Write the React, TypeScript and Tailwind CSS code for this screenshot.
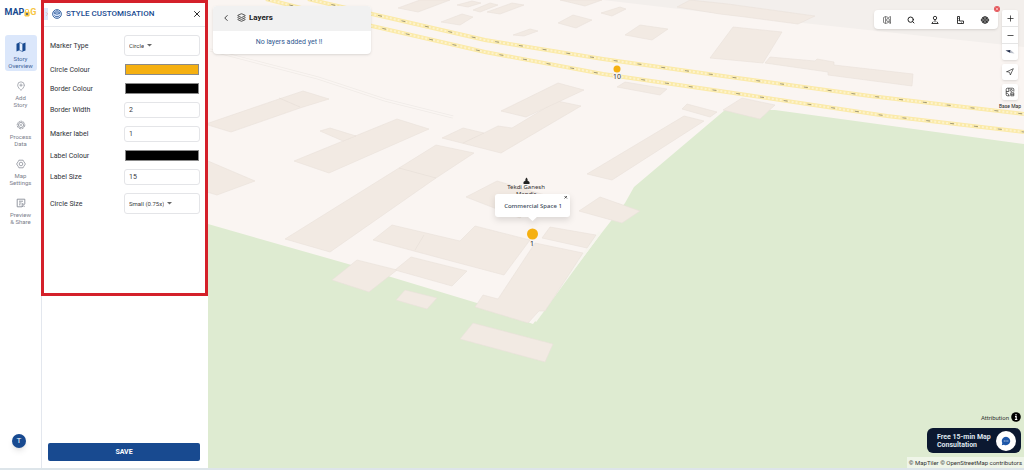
import { useState, type JSX, type ReactNode } from 'react'
import { ChevronLeft, ChevronRight, Layers, MapPinPlusInside, Minus, Navigation, Plus, Search, X } from 'lucide-react'

interface NavEntry {
  lines: [string, string]
  icon: ReactNode
  active?: boolean
}

const NAV: NavEntry[] = [
  { lines: ['Story', 'Overview'], icon: <FoldedMap />, active: true },
  { lines: ['Add', 'Story'], icon: <MapPinPlusInside size={10} strokeWidth={1.5} /> },
  { lines: ['Process', 'Data'], icon: <ProcessIcon /> },
  { lines: ['Map', 'Settings'], icon: <HexGear /> },
  { lines: ['Preview', '& Share'], icon: <PreviewIcon /> },
]

const BUILDINGS = [
  '200,126 279,99 303,91 329,99 300,108 231,132 208,125',
  '294,161 397,119 429,129 329,173',
  '320,131 330,128 356,136 343,141',
  '200,158 208,161 255,181 217,195 200,190',
  '285,239 399,168 436,145 474,153 436,178 330,252',
  '442,138 463,128 484,133 498,126 512,128 557,101 581,106 501,153',
  '501,111 558,83 584,90 526,117',
  '617,87 625,82 667,89 660,95',
  '682,109 687,104 717,112 710,117',
  '587,174 684,116 704,121 612,180',
  '579,211 600,197 640,211 622,223',
  '466,197 497,181 545,195 520,218',
  '373,240 392,225 460,241 475,226 530,240 504,275 440,258',
  '542,238 550,227 596,235 587,248',
  '535,243 583,253 545,311 539,311 528,323 475,307 483,295 498,299',
  '395,270 411,257 467,271 452,286',
  '332,280 357,260 397,270 369,292',
  '396,300 405,290 437,298 427,309',
  '460,339 473,323 553,344 545,362',
  '723,110 742,98 775,105 760,119',
  '710,58 733,27 782,32 763,63',
  '765,63 770,57 815,61 817,59 834,62 834,65 913,74 912,86 828,75 828,72',
  '625,35 640,25 668,29 652,40',
  '558,23 573,15 592,20 576,28',
  '513,35 530,29 538,31 524,36',
  '601,13 620,7 626,9 612,16',
  '487,12 512,3 524,5 500,14',
  '473,10 490,3 498,5 480,12',
  '560,0 585,6 602,0',
  '398,8 420,0 450,0 418,12',
  '457,5 472,1 481,3 468,7',
  '441,22 462,14 473,17 460,25',
  '677,7 690,0 728,4 815,16 798,24 745,17 720,14',
]

const ROADS = [
  'M308 -1 L372 14 L485 40 L603 59 L730 77 L870 96 L1024 114',
  'M266 -1 L372 26 L485 52 L603 74 L720 91 L887 116 L1024 132',
]

function FoldedMap(): JSX.Element {
  return (
    <svg viewBox="0 0 12 12" className="size-3 fill-[#184a90]">
      <path d="M1.5 2.8 4.4 1.4v7.8L1.5 10.4zM7.6 2.8l2.9-1.2v7.8L7.6 10.6z" />
      <path d="M4.4 1.4l3.2 1.4v7.8L4.4 9.2z" className="fill-[#e8f0fd] stroke-[#184a90] stroke-[0.6]" />
    </svg>
  )
}

function ProcessIcon(): JSX.Element {
  return (
    <svg viewBox="0 0 10 10" className="size-2.5 fill-none stroke-current stroke-[0.7]">
      <circle cx="5" cy="5" r="3.8" strokeDasharray="2.2 0.6" />
      <circle cx="5" cy="5" r="2.6" />
      <path d="M3.6 5h1.2l.8-1.2M4.8 5l.9 1.2" />
    </svg>
  )
}

function HexGear(): JSX.Element {
  return (
    <svg viewBox="0 0 10 10" className="size-2.5 fill-none stroke-current stroke-[0.7]" strokeLinejoin="round">
      <path d="M2.9 1.2h4.200l.6 1.200 1.700 2.600-1.700 2.600-.6 1.200H2.900l-.6-1.200L.6 5l1.700-2.600z" />
      <circle cx="5" cy="5" r="1.800" />
    </svg>
  )
}

function PreviewIcon(): JSX.Element {
  return (
    <svg viewBox="0 0 10 10" className="size-2.5 fill-none stroke-current stroke-[0.8]">
      <path d="M6 8.8H1.2V1.2h7.6V6M3 3.2h4M3 5h2.5M3 6.8h1.5" />
      <path d="M6.2 5.6v3.2l1-1 1.4.8M6.2 5.6l2.6 1.2" />
    </svg>
  )
}

function Logo(): JSX.Element {
  return (
    <a
      href="#home"
      aria-label="MAPOG"
      className="flex h-[26px] items-center justify-center text-[9px] font-bold text-[#184a90]"
    >
      MAP
      <svg viewBox="0 0 6 8" className="h-2 w-1.5">
        <path d="M1.4 3V1.8a1.6 1.6 0 0 1 3.2 0V3" className="fill-none stroke-[#f6c544]" />
        <rect x="0.4" y="2.8" width="5.2" height="4.6" rx="0.8" className="fill-[#f6c544]" />
        <circle cx="3" cy="5" r="0.9" className="fill-[#184a90]" />
      </svg>
      <span className="text-[#f6c544]">G</span>
    </a>
  )
}

function Sidebar(): JSX.Element {
  return (
    <nav className="flex w-[41px] shrink-0 flex-col bg-white">
      <Logo />
      <ul className="mt-[9px] flex flex-col items-center gap-[3px]">
        {NAV.map(({ lines, icon, active }) => (
          <li key={lines[1]}>
            <button
              className={
                active
                  ? 'flex h-9 w-8 flex-col items-center rounded-[3px] bg-[#dbe7fb] pt-1.5 text-[6px] leading-[7px] text-[#3d6299]'
                  : 'flex h-9 w-8 flex-col items-center pt-1.5 text-[6px] leading-[7px] text-[#7b808b]'
              }
            >
              <span className="flex h-3 items-center">{icon}</span>
              <span className="mt-0.5 whitespace-nowrap">
                {lines[0]}
                <br />
                {lines[1]}
              </span>
            </button>
          </li>
        ))}
      </ul>
      <button className="mt-auto mb-5 ml-3 flex size-3.5 items-center justify-center rounded-full bg-[#184a90] text-[8px] text-white shadow-md">
        T
      </button>
    </nav>
  )
}

function Row({ id, label, children }: { id: string; label: string; children: ReactNode }): JSX.Element {
  return (
    <div className="flex items-center">
      <label htmlFor={id} className="h-2.5 flex-1 text-[7px] leading-[10px] whitespace-nowrap text-[#2f3237]">
        {label}
      </label>
      {children}
    </div>
  )
}

function SelectRow({ id, label, options }: { id: string; label: string; options: string[] }): JSX.Element {
  const [value, setValue] = useState(options[0])
  return (
    <Row id={id} label={label}>
      <div className="flex h-[21px] w-[76px] items-center gap-[3px] rounded-[3px] border border-[#e4e5e8] px-1">
        <select
          id={id}
          value={value}
          onChange={e => setValue(e.target.value)}
          className="appearance-none text-[6px] leading-[10px] text-[#3b3d42] [field-sizing:content]"
        >
          {options.map(o => (
            <option key={o}>{o}</option>
          ))}
        </select>
        <svg viewBox="0 0 5 3" className="h-[3px] w-[5px] fill-[#666]">
          <path d="M0 0h5L2.5 2.6z" />
        </svg>
      </div>
    </Row>
  )
}

function ColourRow({ id, label, initial }: { id: string; label: string; initial: string }): JSX.Element {
  const [value, setValue] = useState(initial)
  return (
    <Row id={id} label={label}>
      <input
        id={id}
        type="color"
        value={value}
        onChange={e => setValue(e.target.value)}
        className="block h-[11px] w-[76px] appearance-none px-px [&::-webkit-color-swatch]:rounded-none [&::-webkit-color-swatch]:border [&::-webkit-color-swatch]:border-[#8a8a8a] [&::-webkit-color-swatch-wrapper]:p-0"
      />
    </Row>
  )
}

function TextRow({ id, label, initial }: { id: string; label: string; initial: string }): JSX.Element {
  const [value, setValue] = useState(initial)
  return (
    <Row id={id} label={label}>
      <input
        id={id}
        value={value}
        onChange={e => setValue(e.target.value)}
        className="h-4 w-[76px] rounded-[3px] border border-[#e4e5e8] px-1 text-[7px] text-[#3b3d42]"
      />
    </Row>
  )
}

function StylePanel(): JSX.Element {
  return (
    <aside className="flex w-[167px] shrink-0 flex-col justify-between border-l border-[#e3e7ee] bg-white">
      <section className="-ml-px border-[3px] border-[#d4202a] pb-[79px]">
        <header className="flex h-6 items-center border-b border-[#e6e8ec] pr-[3px] pb-0.5">
          <button aria-label="Collapse" className="flex h-3 w-1 items-center bg-[#dbe7fb] text-[#e08a8a]">
            <ChevronRight size={6} className="shrink-0" />
          </button>
          <svg viewBox="0 0 10 10" className="ml-1 size-2.5 fill-none stroke-[#184a90] stroke-[0.8]">
            <circle cx="5" cy="5" r="4.4" className="fill-[#dbe7fb]" />
            <circle cx="3.2" cy="3.8" r="1" />
            <circle cx="6.8" cy="3.8" r="1" />
            <path d="M2.4 6.4c1 1.800 4.200 1.800 5.200 0M5 1v2M4.200 5.200h1.600" />
          </svg>
          <h1 className="ml-1 text-[8px] font-medium whitespace-nowrap text-[#184a90]">STYLE CUSTOMISATION</h1>
          <button aria-label="Close" className="ml-auto text-black">
            <X size={10} />
          </button>
        </header>
        <form className="flex flex-col gap-2 pt-2 pr-[5px] pl-1.5">
          <SelectRow id="marker-type" label="Marker Type" options={['Circle', 'Icon', 'Pin']} />
          <ColourRow id="circle-colour" label="Circle Colour" initial="#f5b011" />
          <ColourRow id="border-colour" label="Border Colour" initial="#000000" />
          <TextRow id="border-width" label="Border Width" initial="2" />
          <TextRow id="marker-label" label="Marker label" initial="1" />
          <ColourRow id="label-colour" label="Label Colour" initial="#000000" />
          <TextRow id="label-size" label="Label Size" initial="15" />
          <SelectRow id="circle-size" label="Circle Size" options={['Small (0.75x)', 'Medium (1x)', 'Large (1.5x)']} />
        </form>
      </section>
      <button className="mr-2 mb-[7px] ml-1.5 h-[18px] rounded-[2px] bg-[#184a90] text-[7px] font-bold text-white">
        SAVE
      </button>
    </aside>
  )
}

function MapCanvas(): JSX.Element {
  return (
    <svg
      viewBox="208 0 816 468"
      preserveAspectRatio="xMidYMid slice"
      className="absolute inset-0 size-full bg-[#faf5f2]"
    >
      <path d="M603 0 L730 15 L803 23 L1024 47 V0Z" className="fill-[#f3efec]" />
      <path
        d="M208 224 L348 264 L477 303 L533 324 L600 235 L625 203 L634 187 L725 110 L775 110 L1024 144 V468 H208Z"
        className="fill-[#deebd1]"
      />
      <path d="M535 321 L600 232" className="fill-none stroke-[#f7f5ef] stroke-[3]" />
      <path d="M210 50 L318 78 L385 100 L453 117" className="fill-none stroke-[#f0ebe7] stroke-[3]" />
      <path d="M210 50 L318 78 L385 100 L453 117" className="fill-none stroke-[#faf5f2] stroke-[1.6]" />
      {BUILDINGS.map(points => (
        <polygon key={points} points={points} className="fill-[#f2eae3] stroke-[#e9e1da] stroke-[0.6]" />
      ))}
      <path d="M279 98 L300 107 M399 168 L436 178 M415 250 L424 235 M463 143 L484 133" className="stroke-[#e6ddd6] stroke-[0.6]" />
      {ROADS.map(d => (
        <g key={d} className="fill-none">
          <path d={d} className="stroke-[#fbeaa8] stroke-[4]" />
          <path d={d} strokeDasharray="2 2" className="stroke-[#fdf3cd] stroke-2" />
          <path d={d} strokeDasharray="4 20" className="stroke-[#a39a72] stroke-1" />
        </g>
      ))}
      <circle cx="617" cy="69" r="3.5" className="fill-[#f5b011]" />
      <text
        x="617"
        y="79"
        textAnchor="middle"
        className="fill-[#333] stroke-[#faf5f2] stroke-2 font-['Noto_Sans',sans-serif] text-[7px] [paint-order:stroke]"
      >
        10
      </text>
      <path d="M526.5 177.5l1.2 1.800-.4.9 2.200 1.800v2h-6v-2l2.200-1.800-.4-.9z" className="fill-[#222]" />
      <g textAnchor="middle" className="fill-[#333] font-['Noto_Sans',sans-serif] text-[6px]">
        <text x="526" y="189">
          Tekdi Ganesh
        </text>
        <text x="526" y="196">
          Mandir
        </text>
      </g>
      <g className="drop-shadow-md">
        <rect x="495" y="194" width="75" height="23" rx="3" className="fill-white" />
        <path d="M527 216h11l-5.5 5z" className="fill-white" />
      </g>
      <text
        x="533"
        y="208"
        textAnchor="middle"
        className="fill-[#3c4a5a] font-['Noto_Sans',sans-serif] text-[6px] font-medium"
      >
        Commercial Space 1
      </text>
      <path d="M564.5 196l2.500 2.500M567 196l-2.500 2.500" className="stroke-[#333] stroke-[0.8]" />
      <circle cx="532.5" cy="234" r="5.5" className="fill-[#f5b011]" />
      <text x="532" y="246" textAnchor="middle" className="fill-[#222] font-['Noto_Sans',sans-serif] text-[7px]">
        1
      </text>
    </svg>
  )
}

function LayersCard(): JSX.Element {
  return (
    <section className="w-[158px] overflow-hidden rounded-[4px] bg-white shadow">
      <header className="flex h-[25px] items-center bg-[#f1f1f1] pb-0.5 pl-2 text-[#222]">
        <button aria-label="Back">
          <ChevronLeft size={10} />
        </button>
        <Layers size={9} className="ml-1.5" />
        <h2 className="ml-[3px] text-[8px] font-bold">Layers</h2>
      </header>
      <p className="h-[23px] pr-1.5 text-center text-[7px] leading-[23px] text-[#2f5a92]">No layers added yet !!</p>
    </section>
  )
}

function Toolbar(): JSX.Element {
  return (
    <div className="relative flex h-[19px] w-[124px] items-center justify-around rounded-[4px] bg-white text-[#222] shadow">
      <button aria-label="Map area">
        <svg viewBox="0 0 10 10" className="size-2.5 fill-none stroke-[#555] stroke-[0.7]">
          <path d="M1.5 2.5 3.500 1.500l3 1 2-1v7l-2-1-3 1-2-1zM3.500 1.500v7" />
          <circle cx="6" cy="5" r="1.5" />
          <path d="M7 6l1.500 2" />
        </svg>
      </button>
      <button aria-label="Search">
        <Search size={8} strokeWidth={3} />
      </button>
      <button aria-label="Street view">
        <svg viewBox="0 0 10 10" className="size-2.5 fill-none stroke-current stroke-[0.9]">
          <circle cx="5" cy="3" r="1.700" />
          <path d="M5 4.800v2.400M3.200 6.600 1.800 8.500h6.400L6.800 6.600" />
        </svg>
      </button>
      <button aria-label="Measure">
        <svg viewBox="0 0 10 10" className="size-2.5 fill-none stroke-current stroke-[0.9]">
          <path d="M2.500 1.500h2v4.500h4v2.500h-6zM2.500 3.500h1M2.500 5.500h1M6.500 8.500v-1" />
        </svg>
      </button>
      <button aria-label="Locate">
        <svg viewBox="0 0 10 10" className="size-2.5 fill-none stroke-current stroke-1">
          <circle cx="5" cy="5" r="3.300" />
          <path d="M.8 5h8.400M5 1.700v1.800M5 6.500v1.800M3.400 2.500v1.500h3.200V2.500M3.400 7.500V6h3.200v1.500" />
        </svg>
      </button>
      <button
        aria-label="Close toolbar"
        className="absolute -top-1 -right-0.5 flex size-1.5 items-center justify-center rounded-full bg-[#e5585c] text-white"
      >
        <X size={4} strokeWidth={3} />
      </button>
    </div>
  )
}

function ZoomControls(): JSX.Element {
  return (
    <div className="flex w-6 flex-col items-center gap-1 text-[#222]">
      <div className="flex w-4 flex-col divide-y divide-[#e5e5e5] rounded-[2px] bg-white shadow">
        <button aria-label="Zoom in" className="flex h-[17px] items-center justify-center">
          <Plus size={9} />
        </button>
        <button aria-label="Zoom out" className="flex h-[17px] items-center justify-center">
          <Minus size={9} />
        </button>
        <button aria-label="Reset bearing" className="flex h-4 items-center justify-center">
          <svg viewBox="0 0 10 6" className="h-1.5 w-2.5">
            <path d="M.5 1.500 5.500 1 5.500 4z" className="fill-[#1f2b4a]" />
            <path d="M5.500 1 9.500 4.500 5.500 4z" className="fill-[#b9bec8]" />
          </svg>
        </button>
      </div>
      <button aria-label="My location" className="flex size-4 items-center justify-center rounded-[2px] bg-white shadow">
        <Navigation size={8} />
      </button>
      <button className="flex flex-col items-center gap-0.5 text-[5px] leading-[8px] whitespace-nowrap">
        <span className="flex size-4 items-center justify-center rounded-[2px] bg-white shadow">
          <svg viewBox="0 0 10 10" className="size-2.5 fill-none stroke-current stroke-[0.7]">
            <path d="M8.800 4.600V2.400a1.200 1.200 0 0 0-1.200-1.200H2.400a1.200 1.200 0 0 0-1.200 1.200v5.200a1.200 1.200 0 0 0 1.200 1.200h2.200" />
            <path d="M1.200 4.500h2.600V1.200M1.200 6.200c2 0 2.600 1 2.600 2.600M5.800 5.800h3v3h-3zM5.800 7.300h3" />
            <circle cx="6.300" cy="3.400" r="1" />
          </svg>
        </span>
        Base Map
      </button>
    </div>
  )
}

function MapFooter(): JSX.Element {
  return (
    <div className="flex flex-col items-end self-end text-[6px] text-[#333]">
      <button className="mr-[3px] flex items-center gap-0.5">
        Attribution
        <svg viewBox="0 0 10 10" className="size-2.5">
          <circle cx="5" cy="5" r="4.800" />
          <path d="M5 2v1.400M4 4.600h1.200v2.800M3.900 7.500h2.400" className="fill-none stroke-white stroke-[1.100]" />
        </svg>
      </button>
      <button className="mt-1.5 mr-[3px] flex h-[25px] w-[94px] items-center justify-between rounded-[6px] bg-[#0b1830] pr-[5px] pl-2.5 text-left text-[7px] leading-[8px] font-bold whitespace-nowrap text-[#dfe5ee]">
        <span>
          Free 15-min Map
          <br />
          Consultation
        </span>
        <span className="flex size-5 shrink-0 items-center justify-center rounded-full bg-white">
          <svg viewBox="0 0 10 10" className="size-2.5">
            <path d="M5 .8a4.200 4.200 0 1 1-2 7.900L.8 9.200l.5-2.300A4.200 4.200 0 0 1 5 .8z" className="fill-[#1d56a8]" />
            <path d="M2.800 5h.9M4.600 5h.9M6.400 5h.9" className="stroke-white stroke-[0.9]" />
          </svg>
        </span>
      </button>
      <p className="mt-1 bg-white/50 px-0.5 text-[6px] leading-[11px] whitespace-nowrap">
        <a href="#maptiler">© MapTiler</a> <a href="#osm">© OpenStreetMap contributors</a>
      </p>
    </div>
  )
}

export default function App(): JSX.Element {
  return (
    <div className="flex h-screen flex-col font-[Roboto,sans-serif]">
      <div className="flex min-h-0 flex-1">
        <Sidebar />
        <StylePanel />
        <main className="relative flex-1 overflow-hidden">
          <MapCanvas />
          <div className="relative flex h-full flex-col justify-between">
            <div className="flex items-start pt-1.5 pl-[5px]">
              <LayersCard />
              <div className="mt-1 mr-0.5 ml-auto flex items-start">
                <Toolbar />
                <ZoomControls />
              </div>
            </div>
            <MapFooter />
          </div>
        </main>
      </div>
      <footer className="h-0.5 bg-[#dde5ea]" />
    </div>
  )
}
